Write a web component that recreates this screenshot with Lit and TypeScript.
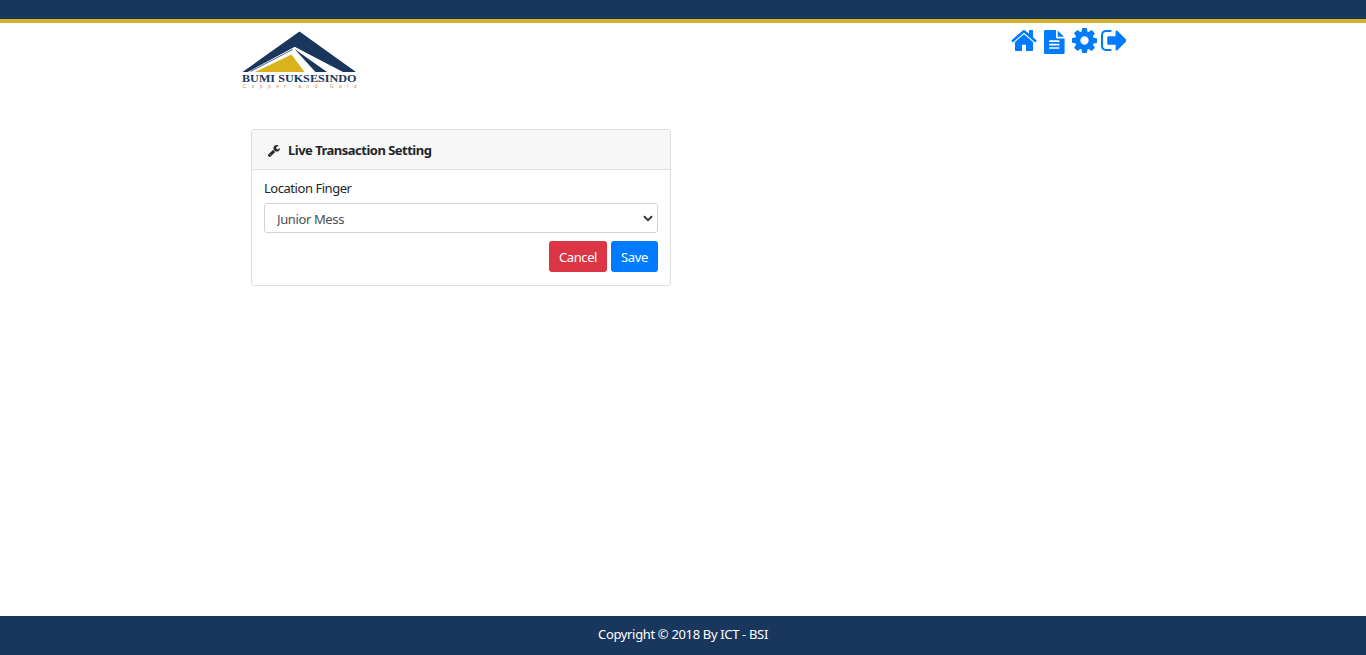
import { LitElement, html, css, svg } from "lit";
import { customElement } from "lit/decorators.js";

const HOME = "M1472 992v480q0 26-19 45t-45 19h-384v-384h-256v384h-384q-26 0-45-19t-19-45v-480q0-1 .5-3t.5-3l575-474 575 474q1 2 1 6zm223-69l-62 74q-8 9-21 11h-3q-13 0-21-7l-692-577-692 577q-12 8-24 7-13-2-21-11l-62-74q-8-10-7-23.5t11-21.5l719-599q32-26 76-26t76 26l244 204v-195q0-14 9-23t23-9h192q14 0 23 9t9 23v408l219 182q10 8 11 21.5t-7 23.5z";
const FILE = "M1596 476q14 14 28 36h-472v-472q22 14 36 28zm-476 164h544v1056q0 40-28 68t-68 28h-1344q-40 0-68-28t-28-68v-1600q0-40 28-68t68-28h800v544q0 40 28 68t68 28zm160 736v-64q0-14-9-23t-23-9h-704q-14 0-23 9t-9 23v64q0 14 9 23t23 9h704q14 0 23-9t9-23zm0-256v-64q0-14-9-23t-23-9h-704q-14 0-23 9t-9 23v64q0 14 9 23t23 9h704q14 0 23-9t9-23zm0-256v-64q0-14-9-23t-23-9h-704q-14 0-23 9t-9 23v64q0 14 9 23t23 9h704q14 0 23-9t9-23z";
const COG = "M1152 896q0-106-75-181t-181-75-181 75-75 181 75 181 181 75 181-75 75-181zm512-109v222q0 12-8 23t-20 13l-185 28q-19 54-39 91 35 50 107 138 10 12 10 25t-9 23q-27 37-99 108t-94 71q-12 0-26-9l-138-108q-44 23-91 38-16 136-29 186-7 28-36 28h-222q-14 0-24.5-8.5t-11.5-21.5l-28-184q-49-16-90-37l-141 107q-10 9-25 9-14 0-25-11-126-114-165-168-7-10-7-23 0-12 8-23 15-21 51-66.5t54-70.5q-27-50-41-99l-183-27q-13-2-21-12.5t-8-23.5v-222q0-12 8-23t19-13l186-28q14-46 39-92-40-57-107-138-10-12-10-24 0-10 9-23 26-36 98.5-107.5t94.5-71.5q13 0 26 10l138 107q44-23 91-38 16-136 29-186 7-28 36-28h222q14 0 24.5 8.5t11.5 21.5l28 184q49 16 90 37l142-107q9-9 24-9 13 0 25 10 129 119 165 170 7 8 7 22 0 12-8 23-15 21-51 66.5t-54 70.5q26 50 41 98l183 28q13 2 21 12.5t8 23.5z";
const SIGN_OUT = "M704 1440q0 4 1 20t.5 26.5-3 23.5-10 19.5-20.5 6.5h-320q-119 0-203.5-84.5t-84.5-203.5v-704q0-119 84.5-203.5t203.5-84.5h320q13 0 22.5 9.5t9.5 22.5q0 4 1 20t.5 26.5-3 23.5-10 19.5-20.5 6.5h-320q-66 0-113 47t-47 113v704q0 66 47 113t113 47h312l11.5 1 11.5 3 8 5.5 7 9 2 13.5zm928-544q0 26-19 45l-544 544q-19 19-45 19t-45-19-19-45v-288h-448q-26 0-45-19t-19-45v-384q0-26 19-45t45-19h448v-288q0-26 19-45t45-19 45 19l544 544q19 19 19 45z";
const WRENCH = "M448 1472q0-26-19-45t-45-19-45 19-19 45 19 45 45 19 45-19 19-45zm644-420l-682 682q-37 37-90 37-52 0-91-37l-106-108q-38-36-38-90 0-53 38-91l681-681q39 98 114.5 173.5t173.5 114.5zm634-435q0 39-23 106-47 134-164.5 217.5t-258.5 83.5q-185 0-316.5-131.5t-131.5-316.5 131.5-316.5 316.5-131.5q58 0 121.5 16.5t107.5 46.5q16 11 16 28t-16 28l-293 169v224l193 107q5-3 79-48.5t135.5-81 70.5-35.5q15 0 23.5 10t8.5 25z";

@customElement("app-root")
export class AppRoot extends LitElement {
  static styles = css`
    :host {
      display: flex;
      flex-direction: column;
      height: 100vh;
      box-sizing: border-box;
      background: #fff;
      color: #212529;
      font: 13px/20px "Noto Sans", "Open Sans", sans-serif;
    }
    * { box-sizing: border-box; }
    svg { display: block; flex: none; }
    .bar { height: 23px; flex: none; background: #19375d; border-bottom: 4px solid #d5b02b; }
    .content { flex: 1; width: 900px; margin: 0 auto; }
    .head { display: flex; justify-content: space-between; height: 106px; padding: 5px 7px 0 8px; }
    .logo { width: 118px; height: 64px; }
    .nav { display: flex; align-items: flex-start; color: #007bff; }
    .nav a { display: block; color: inherit; }
    .nav svg { fill: currentColor; }
    .home { width: 26px; height: 21px; margin: 2px 7.5px 0 0; }
    .file { width: 20.6px; height: 24px; margin: 2px 7.4px 0 0; }
    .cog { width: 25px; height: 25px; margin: 0 3.5px 0 0; }
    .out { width: 25.5px; height: 21px; margin-top: 2px; }
    .card { width: 420px; height: 157px; margin-left: 18px; border: 1px solid #dfdfdf; border-radius: 3px; overflow: hidden; }
    .title { display: flex; align-items: center; height: 40px; padding: 1px 0 0 16px; background: #f7f7f7; border-bottom: 1px solid #dfdfdf; font-weight: 700; letter-spacing: -0.51px; white-space: nowrap; }
    .title svg { width: 12px; height: 12px; margin: 1px 8px 0 0; fill: #212529; }
    .body { padding: 8px 12px 0; }
    .label { display: block; height: 25px; letter-spacing: -0.46px; }
    .field { display: grid; align-items: center; height: 30px; }
    .field > * { grid-area: 1 / 1; }
    select { appearance: none; width: 100%; height: 30px; margin: 0; padding: 2px 12px 0; border: 1px solid #ced4da; border-radius: 3px; background: #fff; color: #495057; font: inherit; letter-spacing: -0.38px; }
    .chevron { justify-self: end; width: 10px; height: 7px; margin-right: 5px; pointer-events: none; }
    .actions { display: flex; justify-content: flex-end; gap: 4px; margin-top: 8px; }
    button { height: 31px; padding: 1px 0 0; border: 0; border-radius: 3px; color: #fff; font: inherit; letter-spacing: -0.4px; }
    .cancel { width: 58px; background: #dc3545; }
    .save { width: 47px; background: #007bff; }
    .footer { height: 39px; flex: none; background: #19375d; color: #fff; text-align: center; line-height: 36px; letter-spacing: -0.34px; }
    .name { font: 700 10.5px "Liberation Serif", serif; fill: #19375d; }
    .tag { font: 5px "Liberation Sans", sans-serif; fill: #d58b4b; }
  `;

  icon(cls: string, box: string, d: string) {
    return html`<svg class=${cls} viewBox=${box} preserveAspectRatio="none">${svg`<path d=${d}></path>`}</svg>`;
  }

  render() {
    return html`
      <div class="bar"></div>
      <main class="content">
        <header class="head">
          <svg class="logo" viewBox="241 28 118 64">
            <path fill="#19375d" d="M242.5 72 299.5 31.5 356 72H342L295 47 248 72Z" />
            <path fill="#fff" d="M248 72 294.5 47 343 72Z" />
            <path fill="none" stroke="#19375d" stroke-width=".8" d="M250.5 71.5 292.5 49.5" />
            <path fill="#d9b21c" d="M255 72 291.5 54.5 304.5 72Z" />
            <path fill="#19375d" d="M294.5 49 327 72H315.5Z" />
            <text class="name" x="242" y="81.9" textLength="114.5" lengthAdjust="spacingAndGlyphs">BUMI SUKSESINDO</text>
            <text class="tag" x="242.5" y="88.3" textLength="114" xml:space="preserve">Copper and Gold</text>
          </svg>
          <nav class="nav">
            <a>${this.icon("home", "69 253 1654 1283", HOME)}</a>
            <a>${this.icon("file", "128 0 1536 1792", FILE)}</a>
            <a>${this.icon("cog", "128 128 1536 1536", COG)}</a>
            <a>${this.icon("out", "64 256 1568 1280", SIGN_OUT)}</a>
          </nav>
        </header>
        <section class="card">
          <div class="title">${this.icon("", "85 128 1641 1643", WRENCH)}<span>Live Transaction Setting</span></div>
          <div class="body">
            <label class="label" for="location">Location Finger</label>
            <div class="field">
              <select id="location"><option>Junior Mess</option></select>
              <svg class="chevron" viewBox="0 0 10 7"><path d="M1 1.3 5 5.2 9 1.3" fill="none" stroke="#343a40" stroke-width="2" /></svg>
            </div>
            <div class="actions">
              <button class="cancel">Cancel</button>
              <button class="save">Save</button>
            </div>
          </div>
        </section>
      </main>
      <footer class="footer">Copyright © 2018 By ICT - BSI</footer>
    `;
  }
}
